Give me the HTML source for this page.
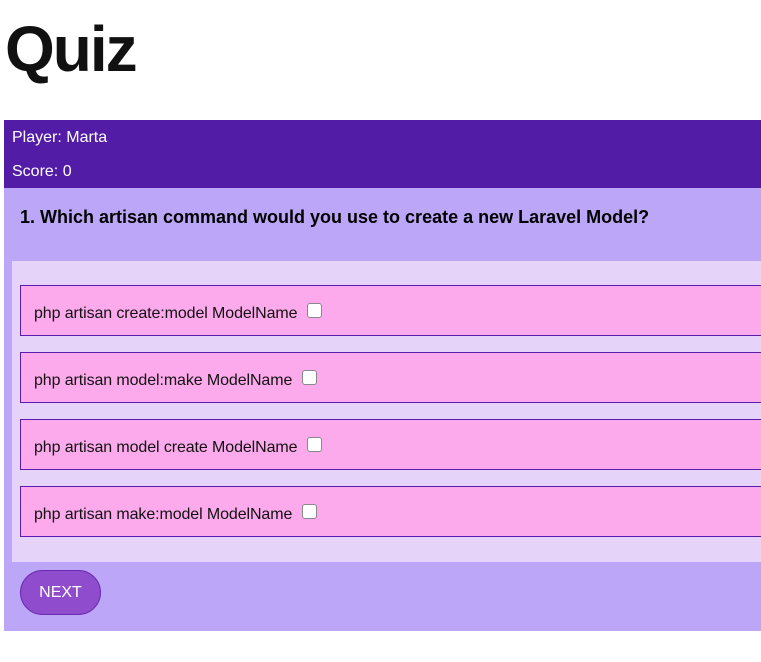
<!DOCTYPE html>
<html><head><style>
body{margin:0;width:761px;height:662px;overflow:hidden;background:#fff;font-family:"Liberation Sans",Arial,sans-serif;position:relative}
.a{position:absolute}
h1{position:absolute;left:5px;top:12px;margin:0;font-size:64px;font-weight:bold;color:#111;line-height:74px;letter-spacing:-2px}
.hdr{left:4px;top:120px;width:757px;height:68px;background:#521ca6;color:#fff;font-size:16px}
.main{left:4px;top:188px;width:757px;height:443px;background:#bca6f7}
.q{left:20px;top:207px;font-size:18px;font-weight:bold;color:#000}
.panel{left:12px;top:261px;width:749px;height:301px;background:#e5d3fa}
.opt{left:20px;width:741px;height:49px;border:1px solid #5a1cae;border-right:none;background:#fdaaec;font-size:16px;color:#111;box-sizing:content-box}
.opt span{position:absolute;left:13px;top:17px;letter-spacing:-0.1px}
.cb{display:inline-block;width:13px;height:13px;border:1px solid #888;border-radius:3px;background:#fff;vertical-align:0px;margin-left:5px}
.btn{left:20px;top:570px;width:79px;height:43px;border:1px solid #6a2ab0;border-radius:23px;background:#8f4ccc;color:#fff;font-size:16px;text-align:center;line-height:43px}
</style></head><body>
<h1>Quiz</h1>
<div class="a hdr"><div class="a" style="left:8px;top:9px">Player: Marta</div><div class="a" style="left:8px;top:43px">Score: 0</div></div>
<div class="a main"></div>
<div class="a q">1. Which artisan command would you use to create a new Laravel Model?</div>
<div class="a panel"></div>
<div class="a opt" style="top:285px"><span>php artisan create:model ModelName <i class="cb"></i></span></div>
<div class="a opt" style="top:352px"><span>php artisan model:make ModelName <i class="cb"></i></span></div>
<div class="a opt" style="top:419px"><span>php artisan model create ModelName <i class="cb"></i></span></div>
<div class="a opt" style="top:486px"><span>php artisan make:model ModelName <i class="cb"></i></span></div>
<div class="a btn">NEXT</div>
</body></html>
